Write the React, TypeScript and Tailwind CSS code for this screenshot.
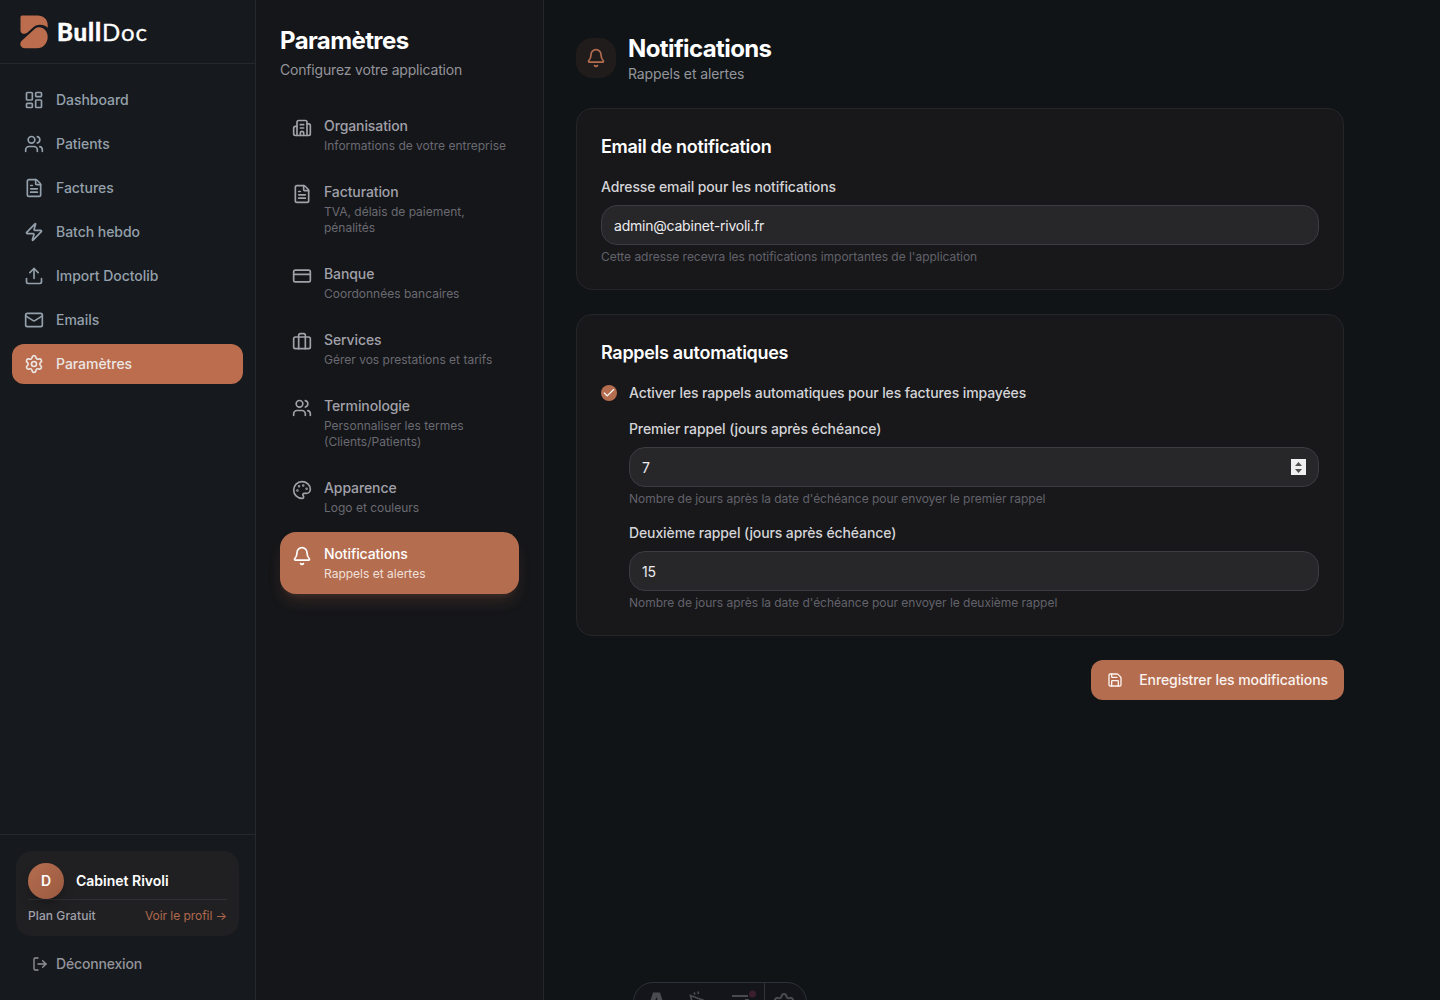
import type { ReactNode } from 'react';
import {
  Bell,
  Briefcase,
  Building2,
  Check,
  CreditCard,
  FileText,
  LayoutDashboard,
  LogOut,
  Mail,
  Palette,
  Save,
  Settings,
  Upload,
  Users,
  Zap,
} from 'lucide-react';
import type { LucideIcon } from 'lucide-react';
import clsx from 'clsx';

interface NavItem {
  label: string;
  icon: LucideIcon;
}

interface SettingsItem extends NavItem {
  description: string;
}

const navItems: NavItem[] = [
  { label: 'Dashboard', icon: LayoutDashboard },
  { label: 'Patients', icon: Users },
  { label: 'Factures', icon: FileText },
  { label: 'Batch hebdo', icon: Zap },
  { label: 'Import Doctolib', icon: Upload },
  { label: 'Emails', icon: Mail },
  { label: 'Paramètres', icon: Settings },
];

const settingsItems: SettingsItem[] = [
  { label: 'Organisation', description: 'Informations de votre entreprise', icon: Building2 },
  { label: 'Facturation', description: 'TVA, délais de paiement, pénalités', icon: FileText },
  { label: 'Banque', description: 'Coordonnées bancaires', icon: CreditCard },
  { label: 'Services', description: 'Gérer vos prestations et tarifs', icon: Briefcase },
  { label: 'Terminologie', description: 'Personnaliser les termes (Clients/Patients)', icon: Users },
  { label: 'Apparence', description: 'Logo et couleurs', icon: Palette },
  { label: 'Notifications', description: 'Rappels et alertes', icon: Bell },
];

const Logo = () => (
  <div className="flex h-16 shrink-0 items-center gap-[9px] border-b border-[#25282c] pl-5">
    <svg viewBox="0 0 28 34" className="h-[34px] w-7 text-[#bb6d4d]" fill="currentColor">
      <path d="M2 .5H17.5C23.5.5 27.7 4.5 27.7 10V12.800C24.5 9.3 17.5 8.600 13.600 11.900L7.2 17.800C5.2 19.600.5 19.200.5 15.5V2Q.5.5 2 .5Z" />
      <path d="M14.3 14.200C19.5 9.500 27.7 13.800 27.7 21.800C27.7 28.5 23 33.3 17 33.3H5.2C.6 33.3-1.3 28.5 2 25.5Z" />
    </svg>
    <span className="flex font-['Lato',sans-serif] text-[24px] leading-8 text-white">
      <span className="font-black tracking-[0.9px] [-webkit-text-stroke:0.4px_white]">Bull</span>
      <span className="tracking-[0.9px] [-webkit-text-stroke:0.3px_white]">Doc</span>
    </span>
  </div>
);

const Sidebar = () => (
  <aside className="flex w-64 shrink-0 flex-col border-r border-[#25282c] bg-[#16191d]">
    <Logo />
    <nav className="flex flex-1 flex-col gap-1 px-3 py-4">
      {navItems.map(({ label, icon: Icon }) => (
        <a
          key={label}
          href="#"
          className={clsx(
            'flex h-10 items-center gap-3 rounded-xl px-3 text-sm font-medium tracking-[-0.04px]',
            label === 'Paramètres' ? 'bg-[#bb6d4d] text-[#ebe5e3]' : 'text-[#94a0ab]',
          )}
        >
          <Icon className="size-5" />
          {label}
        </a>
      ))}
    </nav>
    <div className="border-t border-[#25282c] p-4">
      <div className="rounded-2xl bg-[#202023] p-3">
        <div className="flex items-center gap-3">
          <div className="flex size-9 items-center justify-center rounded-full bg-linear-to-br from-[#b56d4f] to-[#9a5a40] text-sm font-semibold text-white shadow-lg shadow-black/20">
            D
          </div>
          <span className="text-sm font-semibold text-white">Cabinet Rivoli</span>
        </div>
        <div className="flex items-center justify-between border-t border-[#303034] pt-2 text-xs">
          <span className="font-medium tracking-[0.08px] text-[#a1a1aa]">Plan Gratuit</span>
          <span className="tracking-[-0.05px] text-[#b0694c]">Voir le profil →</span>
        </div>
      </div>
      <button className="mt-2 flex h-10 w-full items-center gap-2 px-4 text-sm font-medium tracking-[-0.17px] text-[#94949b]">
        <LogOut className="size-4" />
        Déconnexion
      </button>
    </div>
  </aside>
);

const SettingsMenu = () => (
  <section className="w-72 shrink-0 border-r border-[#25262a] bg-[#151619] p-6">
    <h1 className="pt-px text-2xl leading-[31px] font-bold tracking-tight text-white">Paramètres</h1>
    <p className="mt-1 text-sm tracking-[-0.18px] text-[#94949b]">Configurez votre application</p>
    <div className="mt-6 flex flex-col gap-1">
      {settingsItems.map(({ label, description, icon: Icon }) => {
        const active = label === 'Notifications';
        return (
          <a
            key={label}
            href="#"
            className={clsx(
              'flex items-start gap-3 rounded-2xl p-3',
              active ? 'bg-[#b56d4f] text-white shadow-lg shadow-[#b56d4f]/20' : 'text-[#a1a1aa]',
            )}
          >
            <Icon className="mt-0.5 size-5 shrink-0" />
            <div>
              <div className="text-sm font-medium tracking-[-0.1px]">{label}</div>
              <div className={clsx('mt-0.5 text-xs', active ? 'text-[#f0e0da]' : 'text-[#6a6a72]')}>
                {description}
              </div>
            </div>
          </a>
        );
      })}
    </div>
  </section>
);

interface FieldProps {
  id: string;
  label: string;
  value: string;
  hint: string;
  stepper?: boolean;
}

const Field = ({ id, label, value, hint, stepper }: FieldProps) => (
  <div>
    <label htmlFor={id} className="block text-sm font-medium tracking-[-0.11px] text-[#d4d4d8]">
      {label}
    </label>
    <div className="mt-2 flex h-10 items-center rounded-2xl border border-[#3c3c41] bg-[#27272a] px-3">
      <input
        id={id}
        defaultValue={value}
        className="min-w-0 flex-1 bg-transparent pt-0.5 text-sm tracking-[-0.22px] text-[#ececef] outline-none"
      />
      {stepper && (
        <svg viewBox="0 0 15 16" className="h-4 w-[15px] bg-[#efefef]" fill="#505050">
          <path d="M4 7 7.5 3 11 7ZM4 10H11L7.5 14Z" />
        </svg>
      )}
    </div>
    <p className="mt-1 text-xs tracking-[-0.03px] text-[#62626b]">{hint}</p>
  </div>
);

const Card = ({ title, children }: { title: string; children: ReactNode }) => (
  <div className="mt-6 rounded-2xl border border-[#262629] bg-[#18181a] p-6">
    <h3 className="mb-4 text-lg font-semibold tracking-[-0.3px] text-white">{title}</h3>
    {children}
  </div>
);

const NotificationSettings = () => (
  <main className="min-w-0 flex-1 p-8">
    <div className="max-w-3xl">
      <div className="flex items-center gap-3">
        <div className="flex size-10 items-center justify-center rounded-2xl bg-[#201c1c]">
          <Bell className="size-5 text-[#b56d4f]" />
        </div>
        <div>
          <h2 className="pt-px text-2xl leading-[31px] font-bold tracking-tight text-white">Notifications</h2>
          <p className="text-sm tracking-[-0.12px] text-[#94949b]">Rappels et alertes</p>
        </div>
      </div>

      <Card title="Email de notification">
        <Field
          id="email"
          label="Adresse email pour les notifications"
          value="admin@cabinet-rivoli.fr"
          hint="Cette adresse recevra les notifications importantes de l'application"
        />
      </Card>

      <Card title="Rappels automatiques">
        <div className="flex items-center gap-3">
          <span className="flex size-4 items-center justify-center rounded-full bg-[#b56d4f]">
            <Check className="size-3.5 text-white" />
          </span>
          <span className="text-sm font-medium tracking-[-0.11px] text-[#d4d4d8]">
            Activer les rappels automatiques pour les factures impayées
          </span>
        </div>
        <div className="mt-4 ml-7 flex flex-col gap-4">
          <Field
            id="first"
            label="Premier rappel (jours après échéance)"
            value="7"
            hint="Nombre de jours après la date d'échéance pour envoyer le premier rappel"
            stepper
          />
          <Field
            id="second"
            label="Deuxième rappel (jours après échéance)"
            value="15"
            hint="Nombre de jours après la date d'échéance pour envoyer le deuxième rappel"
          />
        </div>
      </Card>

      <div className="mt-6 flex justify-end">
        <button className="flex h-10 items-center gap-4 rounded-xl bg-[#b56d4f] px-4 text-sm font-medium tracking-[-0.08px] text-[#fbf3ef]">
          <Save className="size-4" />
          Enregistrer les modifications
        </button>
      </div>
    </div>
  </main>
);

// Dev toolbar peeking out from the bottom edge
const DevToolbar = () => (
  <div className="absolute -bottom-[22px] left-[633px] flex h-10 w-[174px] overflow-hidden rounded-full border border-[#2d3338] bg-[#14151a] text-[#4a4b50]">
    <svg viewBox="0 0 172 38" className="h-[38px] w-[172px]" fill="none" stroke="currentColor">
      <path
        d="M14 25 19 9.5H26L31 25H26.5L22.5 14 18.500 25Z"
        fill="currentColor"
        stroke="none"
      />
      <path d="M60 26 56.500 12.500 70 17.500M60 9.500 61 11.500M64.500 8.500 64 11" strokeWidth="1.700" />
      <path d="M98 13H114M111 17H115" strokeWidth="2" />
      <circle cx="118.500" cy="11" r="3.500" fill="#3b1f2c" stroke="none" />
      <path d="M130.500 0V38" stroke="#2d3338" />
    </svg>
    <Settings className="absolute top-[9px] left-[138px] size-6" />
  </div>
);

export default function App() {
  return (
    <div className="relative flex h-[1000px] w-full overflow-hidden bg-[#101417] font-['Inter',sans-serif]">
      <Sidebar />
      <SettingsMenu />
      <NotificationSettings />
      <DevToolbar />
    </div>
  );
}
